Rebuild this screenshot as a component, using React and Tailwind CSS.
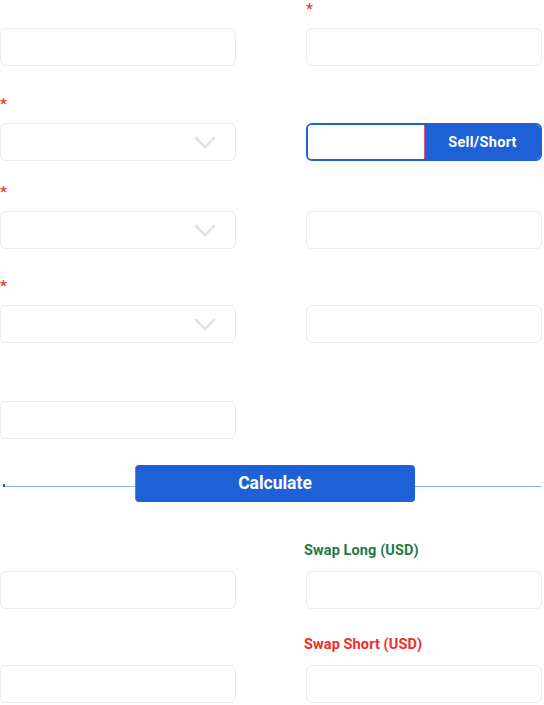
const font = { fontFamily: "Roboto, 'Liberation Sans', sans-serif" };

function Label({ children, className = "" }) {
  return (
    <div className={`h-[20px] mb-[8px] text-[14.5px] leading-[16px] font-bold ${className}`}>
      {children}
    </div>
  );
}

function Star() {
  return <span className="block text-[#f03a2e] text-[15px] leading-[18px] font-bold">*</span>;
}

function Input() {
  return <div className="h-[38px] rounded-[6px] border border-[#ebebeb] bg-white" />;
}

function Chevron() {
  return (
    <svg width="22" height="13" viewBox="0 0 22 13" fill="none">
      <path d="M2 2l9 9 9-9" stroke="#e2e2e2" strokeWidth="2.6" strokeLinecap="round" strokeLinejoin="round" />
    </svg>
  );
}

function Select() {
  return (
    <div className="h-[38px] rounded-[6px] border border-[#ebebeb] bg-white flex items-center justify-end pr-[19px] pt-[1px]">
      <Chevron />
    </div>
  );
}

export default function App() {
  return (
    <div className="w-[544px] h-[705px] bg-white overflow-hidden" style={font}>
      {/* ROW 1 */}
      <div className="grid grid-cols-[236px_236px] gap-x-[70px]">
        <div>
          <Label />
          <Input />
        </div>
        <div>
          <Label><Star /></Label>
          <Input />
        </div>
      </div>

      {/* ROW 2 */}
      <div className="grid grid-cols-[236px_236px] gap-x-[70px] mt-[29px]">
        <div>
          <Label><Star /></Label>
          <Select />
        </div>
        <div>
          <Label />
          <div className="h-[38px] flex rounded-[6px] border-2 border-[#1e61d6] overflow-hidden">
            <div className="w-[116px] bg-white" />
            <button className="flex-1 bg-[#1e61d6] border-l border-[#e0566a] pt-[1px] text-white text-[14.5px] tracking-[0.3px] font-bold">
              Sell/Short
            </button>
          </div>
        </div>
      </div>

      {/* ROW 3 */}
      <div className="grid grid-cols-[236px_236px] gap-x-[70px] mt-[22px]">
        <div>
          <Label><Star /></Label>
          <Select />
        </div>
        <div>
          <Label />
          <Input />
        </div>
      </div>

      {/* ROW 4 */}
      <div className="grid grid-cols-[236px_236px] gap-x-[70px] mt-[28px]">
        <div>
          <Label><Star /></Label>
          <Select />
        </div>
        <div>
          <Label />
          <Input />
        </div>
      </div>

      {/* ROW 5 */}
      <div className="grid grid-cols-[236px_236px] gap-x-[70px] mt-[30px]">
        <div>
          <Label />
          <Input />
        </div>
      </div>

      {/* CALCULATE */}
      <div className="relative mt-[26px] h-[37px] flex items-center justify-center pl-[5px]">
        <div className="absolute left-[3px] right-[3px] top-[21px] h-px bg-[#8aaef2]" />
        <div className="absolute left-[3px] top-[19px] w-[2px] h-[3px] bg-[#2d5fc4]" />
        <button className="relative w-[280px] h-[37px] rounded-[4px] bg-[#1e61d6] border-l border-[#e0566a] text-white text-[17.5px] font-bold">
          Calculate
        </button>
      </div>

      {/* ROW 6 */}
      <div className="grid grid-cols-[236px_236px] gap-x-[70px] mt-[41px]">
        <div>
          <Label />
          <Input />
        </div>
        <div>
          <Label className="text-[#1e7a45] -ml-[2px] tracking-[0.1px]">Swap Long (USD)</Label>
          <Input />
        </div>
      </div>

      {/* ROW 7 */}
      <div className="grid grid-cols-[236px_236px] gap-x-[70px] mt-[28px]">
        <div>
          <Label />
          <Input />
        </div>
        <div>
          <Label className="text-[#f12b2b] -ml-[2px] tracking-[0.1px]">Swap Short (USD)</Label>
          <Input />
        </div>
      </div>
    </div>
  );
}
